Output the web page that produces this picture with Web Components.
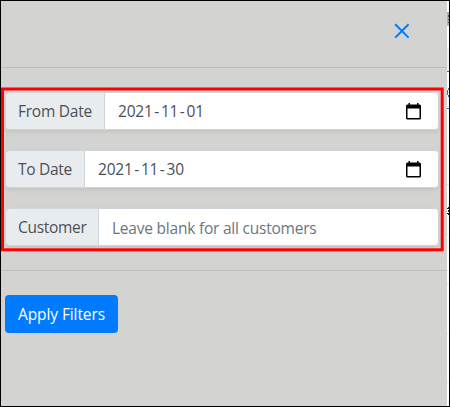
<!DOCTYPE html>
<html lang="en"><head><meta charset="utf-8"><title>Filters</title>
<style>html,body{margin:0;height:100%;overflow:hidden}body{font:15.5px/24px "Open Sans","Noto Sans",sans-serif;color:#495057}</style></head>
<body><filter-page></filter-page>
<script>
const define=(name,html,init)=>customElements.define(name,class extends HTMLElement{
  connectedCallback(){
    if(this.shadowRoot)return;
    this.attachShadow({mode:'open'}).innerHTML=html;
    if(init)init(this,this.shadowRoot);
  }
});

/* Text tracked to fill a given width */
define('fit-text','<style>:host{display:inline-block;white-space:pre}span{display:inline-block}</style><span><slot></slot></span>',(el,root)=>{
  const s=root.querySelector('span'),w=+el.getAttribute('width');
  s.style.letterSpacing=((w-s.getBoundingClientRect().width)/el.textContent.length)+'px';
  el.style.width=w+'px';
});

define('calendar-icon',`<style>:host{display:block;width:15px;height:17px}svg{display:block}</style>
<svg width="15" height="17" viewBox="0 0 15 17"><path d="M2.500 0h1.500v1.500h7V0h1.500v1.500h1q1.500 0 1.500 1.500v12q0 1.500-1.500 1.500h-12Q0 16.500 0 15v-12Q0 1.500 1.500 1.500h1zM1.500 5.500v9.500h12V5.500z" fill="#000" fill-rule="evenodd"/></svg>`);

define('date-value',`<style>:host{display:flex;align-items:center;flex:1}div{display:flex;flex:1}.n{padding:0 1px}.h{width:6.4px;text-align:center}</style><div></div><calendar-icon></calendar-icon>`,(el,root)=>{
  root.querySelector('div').innerHTML=el.getAttribute('value').split('-').map(p=>`<fit-text class="n" width="${p.length*8.63}">${p}</fit-text>`).join('<span class="h">-</span>');
});

define('input-group',`<style>
:host{display:flex;height:38px;box-sizing:border-box;border-radius:4px;box-shadow:0 2px 4px rgba(0,0,0,.075)}
.addon{box-sizing:border-box;padding:6px 0 0 12px;background:#e9ecef;border:1px solid #ced4da;border-radius:4px 0 0 4px;width:var(--addon)}
.field{box-sizing:border-box;flex:1;display:flex;align-items:center;margin-left:-1px;padding:0 17px 0 12px;background:#fff;border:1px solid #ced4da;border-radius:0 4px 4px 0}
</style><div class="addon"><slot name="label"></slot></div><div class="field"><slot></slot></div>`);

define('close-button',`<style>:host{display:block;width:16px;height:16px}svg{display:block}</style>
<svg width="16" height="16" viewBox="0 0 16 16"><path d="M1.200 1.200 14.600 14.600M14.600 1.200 1.200 14.600" stroke="#007bff" stroke-width="2" fill="none"/></svg>`);

define('primary-button',`<style>:host{display:block}button{display:block;width:113px;height:38px;padding:0 0 0 13px;border:0;border-radius:4px;background:#007bff;color:#fff;font:inherit;text-align:left}</style><button><slot></slot></button>`);

define('page-edge',`<style>:host{display:block;width:2px;height:405px}svg{display:block}</style>
<svg width="2" height="405" viewBox="0 0 2 405"><path fill="#fff" d="M0 0h2v405H0z"/><path fill="#f1f2f7" d="M0 46h2v24H0z"/><path fill="#b5b0a8" d="M0 11h2v14H0z"/><path fill="#554d46" d="M1 14h1v2H1zM1 18h1v1H1zM1 21h1v1H1z"/><path fill="#007bff" d="M0 70h2v1H0zM0 107h2v1H0zM0 89h1v5H0zM1 87h1v2H1zM1 94h1v2H1z"/><path fill="#dee2e6" d="M0 183h2v1H0zM0 233h2v1H0zM0 283h2v1H0zM0 332h2v1H0zM0 381h2v1H0z"/><path fill="#222" d="M1 206h1v2H1zM0 207h1v1H0zM1 209h1v2H1zM0 212h1v1H0zM1 212h1v2H1z"/></svg>`);

define('filter-page',`<style>
:host{display:grid;grid-template-columns:446px 2px;box-sizing:border-box;width:450px;height:407px;border:1px solid #000;position:relative;overflow:hidden}
main{background:#d3d3d1;display:flex;flex-direction:column}
header{height:66px;box-sizing:border-box;display:flex;justify-content:flex-end;padding:22px 37px 0 0}
hr{box-sizing:border-box;margin:0;width:100%;height:1px;border:0;background:#bdbdbb;flex:none}
section{display:flex;flex-direction:column;gap:20px;padding:24px 8px 24px 4px}
footer{padding:24px 4px}
.mark{position:absolute;left:-1px;top:-1px;pointer-events:none}
.ph{color:#6c757d;margin:2px 0 0 1px}
</style>
<main><header><close-button></close-button></header><hr>
<section>
<input-group style="--addon:100px"><fit-text slot="label" width="74">From Date</fit-text><date-value value="2021-11-01"></date-value></input-group>
<input-group style="--addon:80px"><fit-text slot="label" width="54">To Date</fit-text><date-value value="2021-11-30"></date-value></input-group>
<input-group style="--addon:94px"><fit-text slot="label" width="68.500">Customer</fit-text><fit-text class="ph" width="204.500">Leave blank for all customers</fit-text></input-group>
</section><hr>
<footer><primary-button><fit-text width="87">Apply Filters</fit-text></primary-button></footer></main>
<page-edge></page-edge>
<svg class="mark" width="450" height="407"><rect x="2.500" y="89" width="439.700" height="160.800" fill="none" stroke="#f00" stroke-width="3"/></svg>`);
</script></body></html>
